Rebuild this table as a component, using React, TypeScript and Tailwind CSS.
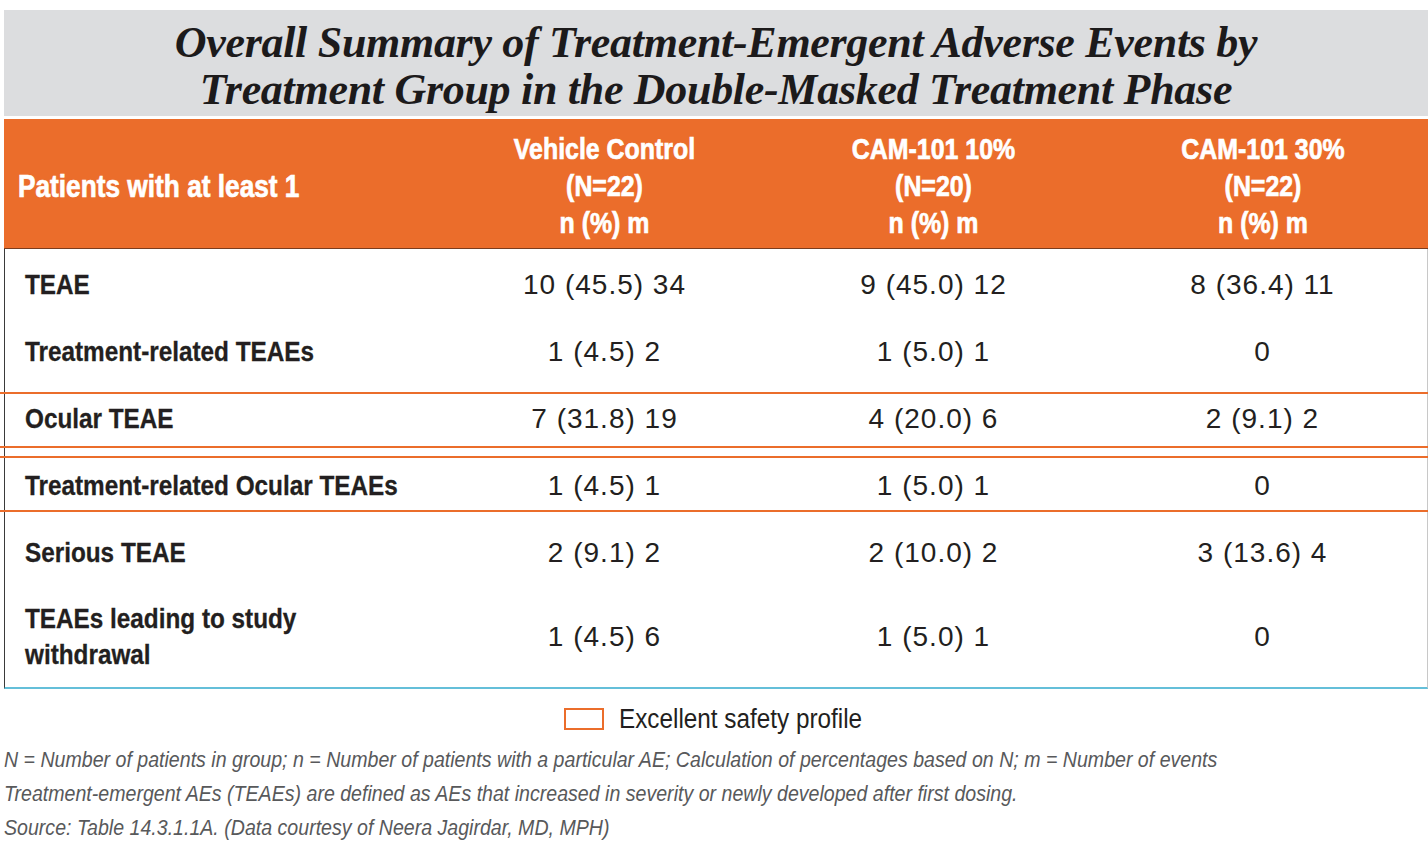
const sans = "font-['Liberation_Sans',Arial,sans-serif]"

const rows = [
  { label: 'TEAE', vals: ['10 (45.5) 34', '9 (45.0) 12', '8 (36.4) 11'] },
  { label: 'Treatment-related TEAEs', vals: ['1 (4.5) 2', '1 (5.0) 1', '0'] },
  { label: 'Ocular TEAE', vals: ['7 (31.8) 19', '4 (20.0) 6', '2 (9.1) 2'], box: 'top-[7px] h-[56px]' },
  { label: 'Treatment-related Ocular TEAEs', vals: ['1 (4.5) 1', '1 (5.0) 1', '0'], box: 'top-[4px] h-[56px]' },
  { label: 'Serious TEAE', vals: ['2 (9.1) 2', '2 (10.0) 2', '3 (13.6) 4'] },
]

const groups = [
  { name: 'Vehicle Control', n: '(N=22)' },
  { name: 'CAM-101 10%', n: '(N=20)' },
  { name: 'CAM-101 30%', n: '(N=22)' },
]

function Values({ vals }: { vals: string[] }) {
  return (
    <>
      {vals.map((v, i) => (
        <div key={i} className={`flex items-center justify-center text-[28px] tracking-[1px] text-[#231f20] ${sans}`}>
          {v}
        </div>
      ))}
    </>
  )
}

function Label({ children }: { children: React.ReactNode }) {
  return (
    <div className="flex items-center pl-[20px]">
      <div
        className={`origin-left scale-x-[0.9] whitespace-nowrap font-bold text-[27px] leading-[36px] text-[#231f20] [-webkit-text-stroke:0.3px_#231f20] ${sans}`}
      >
        {children}
      </div>
    </div>
  )
}

export default function App() {
  return (
    <div className="w-[1428px] h-[862px] bg-white overflow-hidden">
      <div className="pt-[10px] pl-[4px]">
        <div className="h-[106px] pt-[5px] bg-[#dcdddf] flex flex-col items-center justify-center font-['Liberation_Serif',serif] font-bold italic text-[44px] leading-[47px] tracking-[-0.3px] text-[#1c1a1b]">
          <div>Overall Summary of Treatment-Emergent Adverse Events by</div>
          <div>Treatment Group in the Double-Masked Treatment Phase</div>
        </div>
      </div>

      <div className="ml-[4px] mt-[3px]">
        {/* header */}
        <div
          className={`grid grid-cols-[436px_329px_329px_1fr] h-[130px] pt-[4px] bg-[#eb6d2b] border-b border-[#7a3d1f] text-white font-bold [-webkit-text-stroke:0.7px_white] ${sans}`}
        >
          <div className="flex items-center pl-[14px]">
            <div className="origin-left scale-x-[0.82] whitespace-nowrap text-[32px]">Patients with at least 1</div>
          </div>
          {groups.map((g) => (
            <div
              key={g.name}
              className="flex flex-col items-center justify-center scale-x-[0.83] whitespace-nowrap text-[30px] leading-[37px]"
            >
              <div>{g.name}</div>
              <div>{g.n}</div>
              <div>n (%) m</div>
            </div>
          ))}
        </div>

        {/* body */}
        <div className="pt-[2px] border-l border-[#3a3a3a] border-r border-r-[#c8c8c8] border-b-2 border-b-[#64bfd9]">
          {rows.map((r) => (
            <div key={r.label} className="relative grid grid-cols-[435px_329px_329px_1fr] h-[67px]">
              {r.box && <div className={`absolute -left-[5px] -right-[2px] border-y-2 border-[#eb6d2b] ${r.box}`} />}
              <Label>{r.label}</Label>
              <Values vals={r.vals} />
            </div>
          ))}
          <div className="grid grid-cols-[435px_329px_329px_1fr] h-[101px]">
            <Label>
              TEAEs leading to study
              <br />
              withdrawal
            </Label>
            <Values vals={['1 (4.5) 6', '1 (5.0) 1', '0']} />
          </div>
        </div>
      </div>

      <div className="flex items-center justify-center gap-[15px] mt-[15px]">
        <div className="w-[40px] h-[22px] border-2 border-[#eb6d2b]" />
        <div className="w-[245px]">
          <div className={`origin-left scale-x-[0.9] whitespace-nowrap text-[27px] leading-[30px] text-[#231f20] ${sans}`}>
            Excellent safety profile
          </div>
        </div>
      </div>

      <div className="mt-[9px] pl-[4px]">
        <div className={`origin-left scale-x-[0.89] whitespace-nowrap italic text-[22px] leading-[34px] text-[#58595b] ${sans}`}>
          <div>N = Number of patients in group; n = Number of patients with a particular AE; Calculation of percentages based on N; m = Number of events</div>
          <div>Treatment-emergent AEs (TEAEs) are defined as AEs that increased in severity or newly developed after first dosing.</div>
          <div>Source: Table 14.3.1.1A. (Data courtesy of Neera Jagirdar, MD, MPH)</div>
        </div>
      </div>
    </div>
  )
}
